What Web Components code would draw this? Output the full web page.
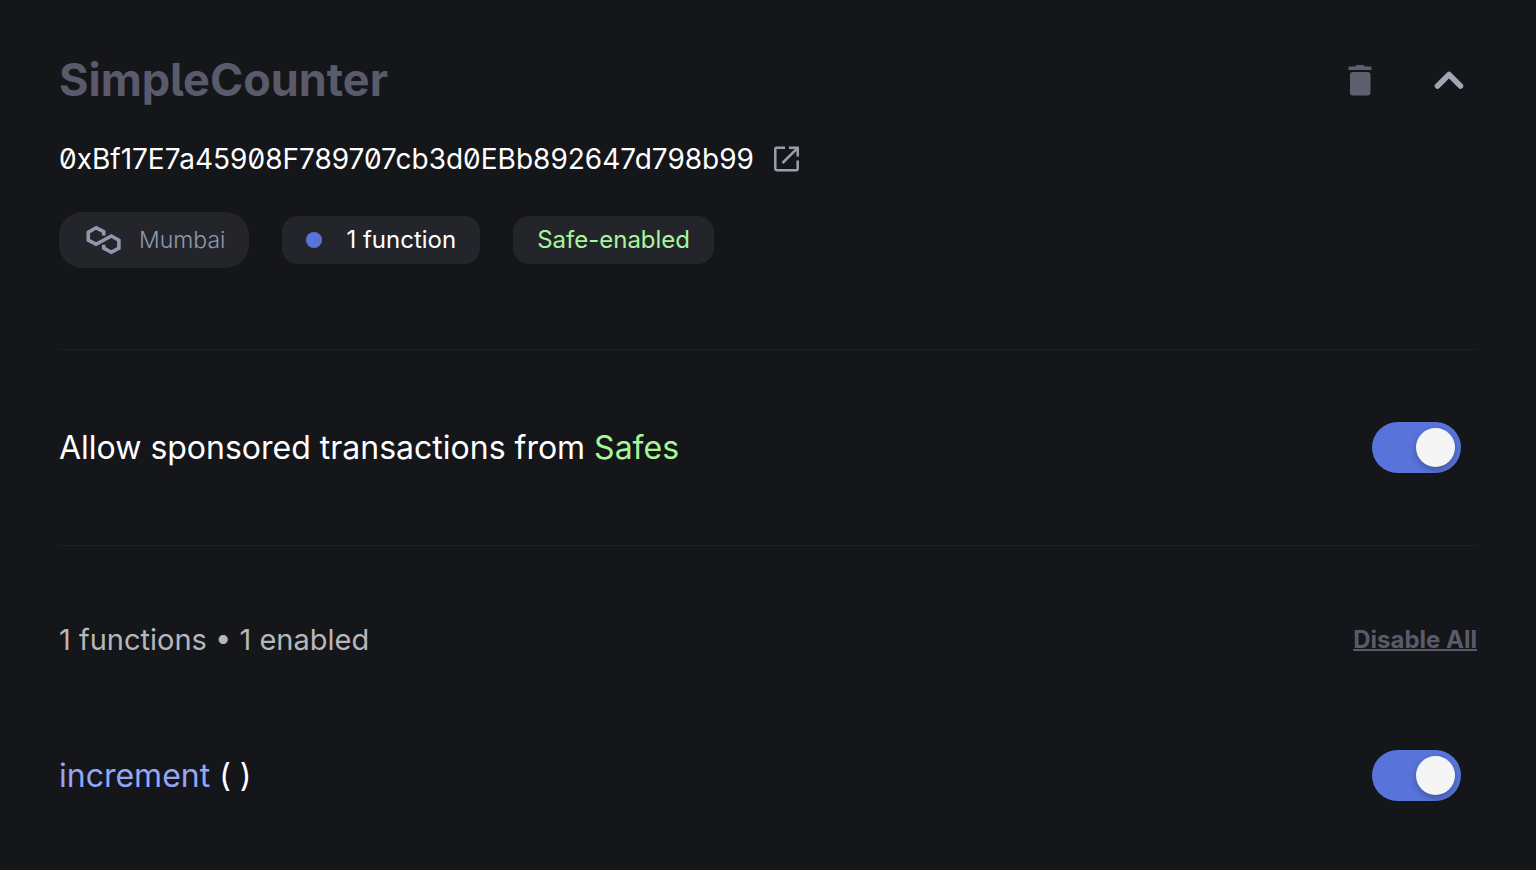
<!DOCTYPE html>
<html lang="en">
<head>
  <meta charset="utf-8">
  <title>SimpleCounter</title>
  <style>
    body {
      margin: 0;
      background: #15161a;
      color: #fff;
      font-family: Inter, sans-serif;
    }
  </style>
</head>
<body>
  <contract-card>
    <contract-header slot="header" address="0xBf17E7a45908F789707cb3d0EBb892647d798b99">SimpleCounter</contract-header>
    <network-chip slot="chips">Mumbai</network-chip>
    <info-chip slot="chips" dot>1 function</info-chip>
    <info-chip slot="chips" class="safe">Safe-enabled</info-chip>
    <toggle-row slot="safes" label="Allow sponsored transactions from Safes">Allow sponsored transactions from <safe-text>Safes</safe-text></toggle-row>
    <function-summary slot="summary">1 functions • 1 enabled</function-summary>
    <toggle-row slot="functions" label="Enable increment"><function-name>increment</function-name> ( )</toggle-row>
  </contract-card>

  <script>
  (function() {
    'use strict';

    function define(name, render) {
      customElements.define(name, class extends HTMLElement {
        constructor() {
          super();
          this.attachShadow({mode: 'open'}).innerHTML = render(this);
        }
      });
    }

    define('contract-card', () => `
      <style>
        :host { display: block; padding: 48px 59px 56px; }
        .chips {
          display: flex;
          align-items: center;
          gap: 33px;
          padding: 35px 0 81px;
        }
        .safes {
          border: solid #202127;
          border-width: 1px 0;
          padding: 72px 0;
        }
        .summary { padding: 72px 0 88px; }
      </style>
      <slot name="header"></slot>
      <div class="chips"><slot name="chips"></slot></div>
      <div class="safes"><slot name="safes"></slot></div>
      <div class="summary"><slot name="summary"></slot></div>
      <slot name="functions"></slot>
    `);

    define('contract-header', el => `
      <style>
        :host { display: block; }
        .top, .actions, .address { display: flex; align-items: center; }
        .top { justify-content: space-between; height: 64px; }
        h1 {
          margin: 0;
          font-size: 45px;
          font-weight: 700;
          line-height: 64px;
          color: #5a5b6a;
          font-feature-settings: "cv05";
        }
        .actions { gap: 41px; padding-right: 4px; }
        button {
          display: flex;
          padding: 0;
          border: 0;
          background: none;
          cursor: pointer;
        }
        a { display: flex; }
        .address {
          gap: 16px;
          margin-top: 29px;
          font-size: 28px;
          line-height: 36px;
          font-feature-settings: "zero";
        }
        svg { display: block; }
      </style>
      <div class="top">
        <h1><slot></slot></h1>
        <div class="actions">
          <button type="button" aria-label="Delete contract">
            <svg width="48" height="48" viewBox="0 0 48 48" fill="#5f606f">
              <path d="M12.500 11.600Q12.500 10.500 13.600 10.500H18.800L20.300 9.300Q20.700 9 21.200 9H26.800Q27.300 9 27.700 9.300L29.200 10.500H34.400Q35.500 10.500 35.500 11.600V14H12.500Z"/>
              <rect x="14" y="16" width="20.500" height="23.500" rx="3"/>
            </svg>
          </button>
          <button type="button" aria-label="Collapse">
            <svg width="48" height="48" viewBox="0 0 48 48" fill="none" stroke="#a3a5b3" stroke-width="5.500" stroke-linecap="round" stroke-linejoin="round">
              <path d="M12.500 30L24 18.500L35.500 30"/>
            </svg>
          </button>
        </div>
      </div>
      <div class="address">
        <span>${el.getAttribute('address')}</span>
        <a href="#explorer" aria-label="View in block explorer">
          <svg width="34" height="34" viewBox="0 0 34 34" fill="none" stroke="#9b9dac" stroke-width="2.500" stroke-linejoin="round">
            <path d="M15 5.800H6.500Q5.300 5.800 5.300 7V27Q5.300 28.200 6.500 28.200H26.500Q27.700 28.200 27.700 27V18.500"/>
            <path d="M19 5.800H27.700V14.500M27.200 6.300L12.500 21" stroke-linejoin="miter"/>
          </svg>
        </a>
      </div>
    `);

    define('network-chip', () => `
      <style>
        :host {
          display: flex;
          align-items: center;
          gap: 16px;
          box-sizing: border-box;
          height: 56px;
          padding: 0 24px;
          border-radius: 24px;
          background: #24252a;
          color: #8e99ad;
          font-size: 23px;
          font-weight: 300;
          line-height: 32px;
        }
      </style>
      <svg width="40" height="32" viewBox="0 0 40 32" fill="none" stroke="#8e99ad" stroke-width="3.600" aria-hidden="true">
        <path d="M20.700 11.500V7.600L13.100 3.800L5.300 8.200V16.200L13.100 20.300L28.300 12L35.900 16.200V24.200L28.300 28.300L20.700 24.200V20.700"/>
      </svg>
      <slot></slot>
    `);

    define('info-chip', el => `
      <style>
        :host {
          display: flex;
          align-items: center;
          gap: 24px;
          padding: 8px 24px;
          border-radius: 16px;
          background: #24252a;
          font-size: 24px;
          line-height: 32px;
        }
        :host(.safe) { color: #a8f59a; }
        .dot {
          width: 16px;
          height: 16px;
          border-radius: 50%;
          background: #5873d9;
        }
      </style>
      ${el.hasAttribute('dot') ? '<span class="dot"></span>' : ''}
      <slot></slot>
    `);

    define('toggle-row', el => `
      <style>
        :host {
          display: flex;
          align-items: center;
          justify-content: space-between;
          padding-right: 16px;
          font-size: 32px;
          line-height: 40px;
        }
        input {
          appearance: none;
          display: flex;
          align-items: center;
          justify-content: flex-end;
          flex: none;
          box-sizing: border-box;
          width: 89px;
          height: 51px;
          margin: 0;
          padding: 6px;
          border-radius: 26px;
          background: #5873d9;
          cursor: pointer;
        }
        input::before {
          content: "";
          width: 39px;
          height: 39px;
          border-radius: 50%;
          background: #f5f5f5;
          box-shadow: 0 3px 6px rgba(0, 0, 0, .25);
        }
        input:not(:checked) { justify-content: flex-start; background: #5a5b6a; }
      </style>
      <label for="toggle"><slot></slot></label>
      <input id="toggle" type="checkbox" role="switch" aria-label="${el.getAttribute('label')}" checked>
    `);

    define('safe-text', () => `
      <style>:host { color: #a8f59a; }</style>
      <slot></slot>
    `);

    define('function-name', () => `
      <style>:host { color: #94a6f5; }</style>
      <slot></slot>
    `);

    define('function-summary', () => `
      <style>
        :host {
          display: flex;
          align-items: center;
          justify-content: space-between;
          color: #b7b7ba;
          font-size: 29px;
          line-height: 44px;
        }
        button {
          padding: 0;
          border: 0;
          background: none;
          color: #5a5b6a;
          font: 700 24px/32px Inter, sans-serif;
          text-decoration: underline 2px;
          cursor: pointer;
        }
      </style>
      <span><slot></slot></span>
      <button type="button">Disable All</button>
    `);
  })();
  </script>
</body>
</html>
